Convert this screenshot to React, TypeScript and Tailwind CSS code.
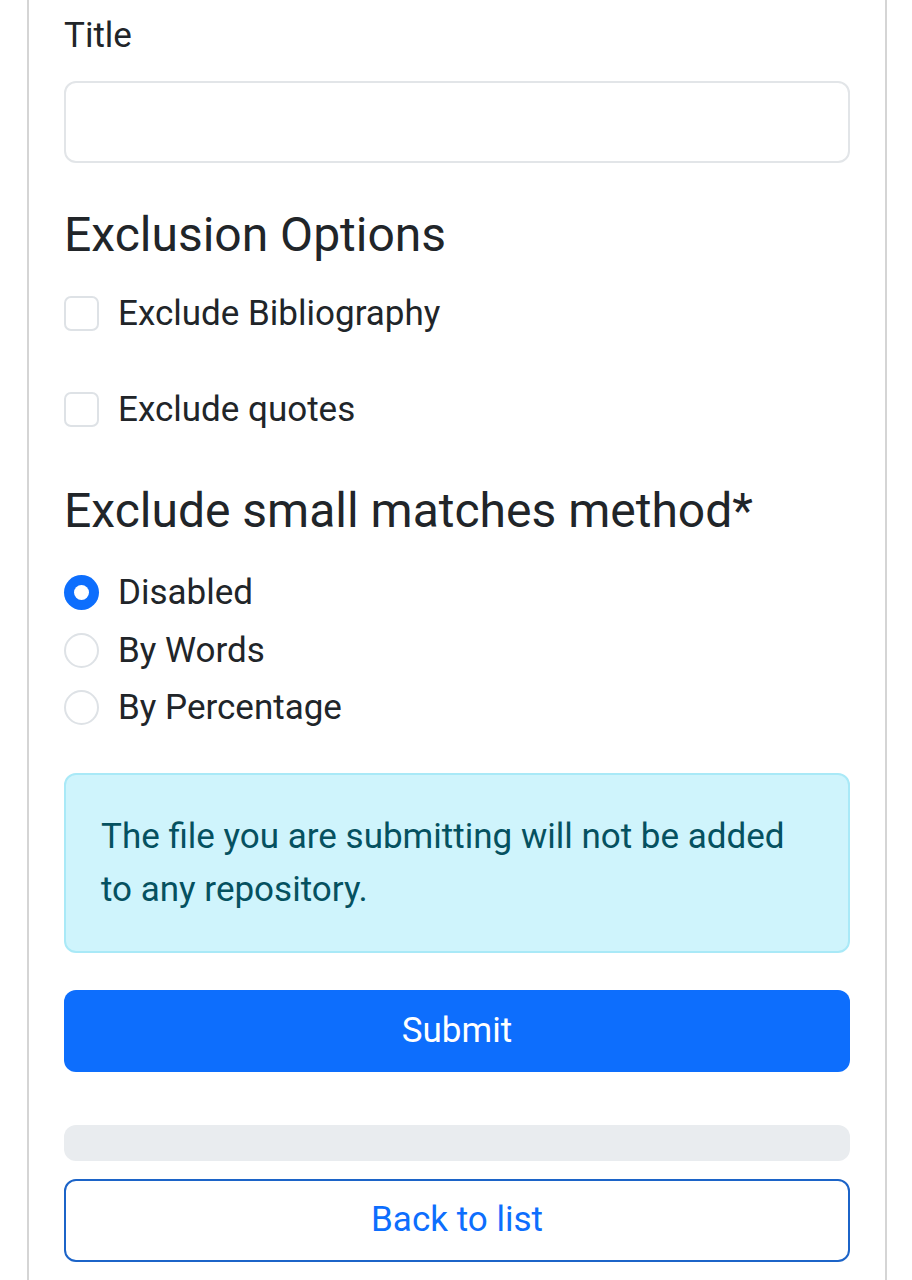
import React from "react";

const methods = [
  { label: "Disabled", checked: true },
  { label: "By Words", checked: false },
  { label: "By Percentage", checked: false },
];

function Checkbox({ label }: { label: string }) {
  return (
    <label className="flex h-[51px] items-center gap-[19px]">
      <span className="h-[35px] w-[35px] shrink-0 rounded-[7px] border-2 border-[#dee2e6] bg-white" />
      <span className="text-[35px] leading-[51px]">{label}</span>
    </label>
  );
}

function Radio({ label, checked }: { label: string; checked: boolean }) {
  return (
    <label className="flex h-[51px] items-center gap-[19px]">
      {checked ? (
        <span className="flex h-[35px] w-[35px] shrink-0 items-center justify-center rounded-full bg-[#0d6efd]">
          <span className="h-[15px] w-[15px] rounded-full bg-white" />
        </span>
      ) : (
        <span className="h-[35px] w-[35px] shrink-0 rounded-full border-2 border-[#dee2e6] bg-white" />
      )}
      <span className="text-[35px] leading-[51px]">{label}</span>
    </label>
  );
}

export default function App() {
  return (
    <div className="min-h-screen bg-white font-['Roboto',sans-serif] text-[#212529]">
      <div className="ml-[27px] w-[860px] border-x-2 border-[#d5d5d5] px-[35px] pt-[10px] pb-[20px]">
        {/* Title field */}
        <div className="text-[35px] leading-[51px]">Title</div>
        <div className="mt-[20px] h-[82px] rounded-[12px] border-2 border-[#e2e5e8] bg-white" />

        {/* Exclusion options */}
        <h3 className="mt-[43px] text-[48px] leading-[58px] font-normal">Exclusion Options</h3>
        <div className="mt-[24px] flex flex-col gap-[45px]">
          <Checkbox label="Exclude Bibliography" />
          <Checkbox label="Exclude quotes" />
        </div>

        {/* Small matches */}
        <h3 className="mt-[47px] text-[48px] leading-[58px] font-normal">Exclude small matches method*</h3>
        <div className="mt-[27px] flex flex-col gap-[6.5px]">
          {methods.map((m) => (
            <Radio key={m.label} label={m.label} checked={m.checked} />
          ))}
        </div>

        {/* Info alert */}
        <div className="mt-[40px] rounded-[12px] border-2 border-[#a9e9f7] bg-[#cff4fc] px-[35px] py-[35px] text-[35px] leading-[53px] text-[#055160]">
          The file you are submitting will not be added to any repository.
        </div>

        <button className="mt-[37px] flex h-[82px] w-full items-center justify-center rounded-[12px] bg-[#0d6efd] text-[35px] text-white">
          Submit
        </button>

        <div className="mt-[53px] h-[36px] rounded-[12px] bg-[#e9ecef]" />

        <button className="mt-[18px] flex h-[83px] w-full items-center justify-center rounded-[12px] border-2 border-[#1c64c8] bg-white text-[35px] text-[#0d6efd]">
          Back to list
        </button>
      </div>
    </div>
  );
}
